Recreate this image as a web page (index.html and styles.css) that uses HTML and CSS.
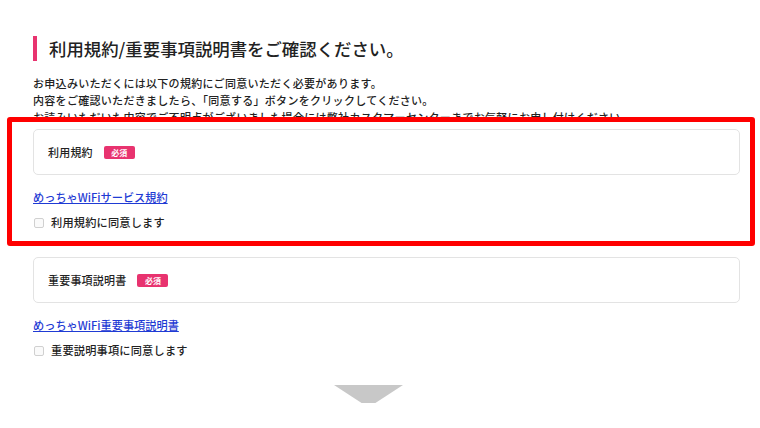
FILE: index.html
```html
<!DOCTYPE html>
<html lang="ja">
<head>
<meta charset="utf-8">
<title>利用規約/重要事項説明書</title>
<link rel="stylesheet" href="styles.css">
</head>
<body>
<main class="page">
  <h1 class="title">利用規約/重要事項説明書をご確認ください。</h1>
  <div class="intro">
    <p>お申込みいただくには以下の規約にご同意いただく必要があります。<br>内容をご確認いただきましたら、「同意する」ボタンをクリックしてください。<br>お読みいただいた内容でご不明点がございました場合には弊社カスタマーセンターまでお気軽にお申し付けください。</p>
  </div>
  <section class="terms terms-first">
    <div class="highlight"></div>
    <div class="card"><span class="card-label">利用規約</span><span class="badge">必須</span></div>
    <a class="doc-link" href="#">めっちゃWiFiサービス規約</a>
    <label class="agree"><span class="check"></span><span>利用規約に同意します</span></label>
  </section>
  <section class="terms terms-second">
    <div class="card"><span class="card-label">重要事項説明書</span><span class="badge">必須</span></div>
    <a class="doc-link" href="#">めっちゃWiFi重要事項説明書</a>
    <label class="agree"><span class="check"></span><span>重要説明事項に同意します</span></label>
  </section>
  <div class="arrow-wrap"><div class="arrow"></div></div>
</main>
</body>
</html>
```

FILE: styles.css
```css
* { box-sizing: border-box; }
html, body { margin: 0; padding: 0; background: #fff; }
body {
  font-family: "Noto Sans CJK JP", "Noto Sans", sans-serif;
  color: #222;
  width: 760px;
  height: 428px;
  overflow: hidden;
}
.page {
  padding: 36px 20px 0 33px;
  width: 760px;
}
.title {
  margin: 0;
  font-size: 17.4px;
  font-weight: 500;
  line-height: 25px;
  height: 25px;
  padding-left: 12px;
  border-left: 4px solid #e8336f;
  letter-spacing: 0;
  color: #222;
}
.intro {
  margin-top: 14px;
  height: 42px;
  overflow: hidden;
}
.intro p {
  margin: 0;
  font-size: 11px;
  letter-spacing: 0.3px;
  line-height: 17px;
  font-weight: 500;
}
.terms {
  position: relative;
  width: 707px;
}
.terms-first { margin-top: 12px; }
.terms-second { margin-top: 26px; }
.highlight {
  position: absolute;
  left: -26px;
  top: -12px;
  width: 748px;
  height: 129px;
  border: 5px solid #ff0000;
  border-radius: 3px;
  pointer-events: none;
}
.card {
  height: 46px;
  border: 1.5px solid #e3e3e3;
  border-radius: 5px;
  display: flex;
  align-items: center;
  padding-left: 14px;
}
.card-label {
  font-size: 11px;
  font-weight: 500;
  letter-spacing: 0.2px;
}
.badge {
  margin-left: 11px;
  width: 31px;
  height: 13px;
  border-radius: 2px;
  background: #e8336f;
  color: #fff;
  font-size: 8px;
  line-height: 13px;
  text-align: center;
  font-weight: 700;
}
.doc-link {
  display: block;
  margin-top: 14px;
  font-size: 11.2px;
  line-height: 17px;
  color: #1f3bd4;
  text-decoration: underline;
  font-weight: 500;
  width: max-content;
}
.agree {
  display: flex;
  align-items: center;
  margin-top: 8px;
  font-size: 11.2px;
  line-height: 17px;
  letter-spacing: 0.2px;
  font-weight: 500;
}
.check {
  width: 10px;
  height: 10px;
  border: 1px solid #d0d0d0;
  border-radius: 2px;
  margin-left: 1px;
  margin-right: 7px;
  background: #fafafa;
}
.arrow-wrap {
  display: flex;
  justify-content: center;
  margin-top: 26px;
  width: 707px;
  padding-right: 36px;
}
.arrow {
  width: 69px;
  height: 18px;
  background: #c8c8c8;
  clip-path: polygon(0 0, 100% 0, 60% 100%, 40% 100%);
}
```
